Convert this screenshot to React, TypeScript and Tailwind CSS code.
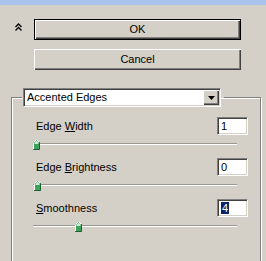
import React from "react"

const sunken =
  "bg-white border border-t-[#808080] border-l-[#808080] border-b-white border-r-white shadow-[inset_1px_1px_0_#404040,inset_-1px_-1px_0_#d4d0c8]"

function Thumb() {
  return (
    <svg width="7" height="11" viewBox="0 0 7 11" className="block">
      <polygon points="3.5,0.5 6.5,3.5 6.5,10.5 0.5,10.5 0.5,3.5" fill="#3da35a" stroke="#1e5e30" strokeWidth="1" />
      <polyline points="0.5,10 0.5,3.5 3.5,0.5 6,3" fill="none" stroke="#ffffff" strokeWidth="1" />
      <polygon points="3.5,1.5 5.5,3.5 5.5,5 1.5,5 1.5,3.5" fill="#cfead6" />
    </svg>
  )
}

function Slider({ at }: { at: number }) {
  return (
    <div className="relative h-[12px] w-[204px]">
      <div className="absolute left-0 right-0 top-[4px] h-[2px] border-t border-[#9a978f] bg-white" />
      <div className="absolute top-0" style={{ left: at }}>
        <Thumb />
      </div>
    </div>
  )
}

function Row({
  label,
  value,
  at,
  selected,
}: {
  label: React.ReactNode
  value: string
  at: number
  selected?: boolean
}) {
  return (
    <div className="flex flex-col">
      <div className="flex items-center justify-between h-[18px]">
        <span className="pl-[3px] pt-[1px]">{label}</span>
        <div className={`${sunken} mr-[2px] w-[31px] h-[18px] flex items-center pl-[3px]`}>
          {selected ? <span className="bg-[#0a246a] text-white leading-[12px] px-[1px]">{value}</span> : <span>{value}</span>}
        </div>
      </div>
      <div className="mt-[4px]">
        <Slider at={at} />
      </div>
    </div>
  )
}

export default function App() {
  return (
    <div className="w-[266px] h-[261px] overflow-hidden bg-[#d4d0c8] text-[11px] text-black font-['Liberation_Sans',Arial,sans-serif]">
      <div className="h-[5px] bg-[#a9c3ec]" />

      <div className="flex pt-[14px] pl-[15px]">
        <div className="w-[7px] mr-[12px] pt-[4px]">
          <svg width="7" height="8" viewBox="0 0 7 8" className="block">
            <path d="M0.5 4 L3.5 1 L6.5 4 M0.5 7.5 L3.5 4.5 L6.5 7.5" fill="none" stroke="#000" strokeWidth="1.3" />
          </svg>
        </div>
        <div className="flex flex-col gap-[9px] w-[207px]">
          <button className="h-[21px] w-full border border-black bg-[#d4d0c8] shadow-[inset_1px_1px_0_#fff,inset_-1px_-1px_0_#404040,inset_-2px_-2px_0_#808080] flex items-center justify-center">
            OK
          </button>
          <button className="h-[21px] w-full bg-[#d4d0c8] shadow-[inset_1px_1px_0_#fff,inset_-1px_-1px_0_#404040,inset_-2px_-2px_0_#808080] flex items-center justify-center">
            Cancel
          </button>
        </div>
      </div>

      <fieldset className="mt-[18px] ml-[11px] w-[250px] h-[200px] border border-[#808080] shadow-[inset_1px_1px_0_#fff,1px_1px_0_#fff] pl-[10px] pr-[10px]">
        <legend className="pl-[1px] pr-[3px]">
          <div className={`${sunken} w-[198px] h-[19px] flex items-center justify-between pl-[3px] pr-[1px]`}>
            <span>Accented Edges</span>
            <div className="w-[16px] h-[15px] bg-[#d4d0c8] shadow-[inset_1px_1px_0_#fff,inset_-1px_-1px_0_#404040,inset_-2px_-2px_0_#808080] flex items-center justify-center">
              <svg width="7" height="4" viewBox="0 0 7 4" className="block">
                <polygon points="0,0 7,0 3.5,4" fill="#000" />
              </svg>
            </div>
          </div>
        </legend>

        <div className="pl-[11px] pt-[10px] flex flex-col gap-[7px]">
          <Row
            label={
              <>
                Edge <span className="underline">W</span>idth
              </>
            }
            value="1"
            at={0}
          />
          <Row
            label={
              <>
                Edge <span className="underline">B</span>rightness
              </>
            }
            value="0"
            at={1}
          />
          <Row
            label={
              <>
                <span className="underline">S</span>moothness
              </>
            }
            value="4"
            at={42}
            selected
          />
        </div>
      </fieldset>
    </div>
  )
}
